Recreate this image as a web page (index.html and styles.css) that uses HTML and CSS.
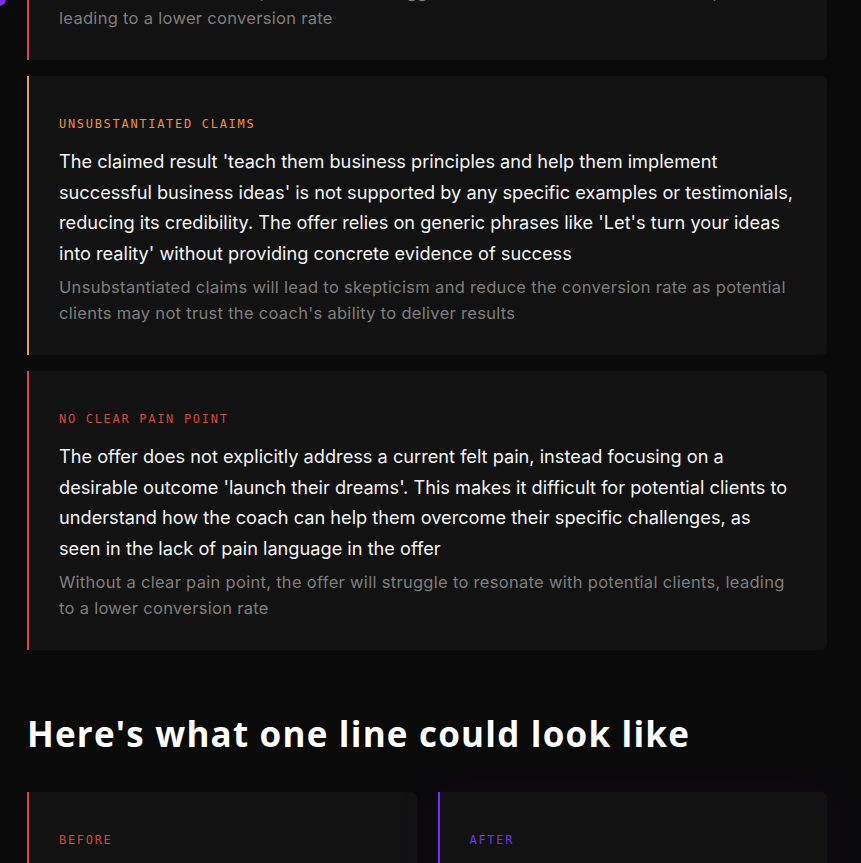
FILE: index.html
```html
<!DOCTYPE html>
<html>
<head>
<meta charset="utf-8"/>
<meta name="viewport" content="width=device-width, initial-scale=1.0"/>
<title>Offer review</title>
<link rel="stylesheet" href="styles.css">
</head>
<body>

<div class="dot"></div>

<div id="main">
  <div class="issues">
    <div class="issue red first">
      <p class="why">Without a clear audience, the offer will struggle to stand out in a crowded market,<br>
      leading to a lower conversion rate</p>
    </div>
    <div class="issue orange">
      <div class="tag">Unsubstantiated claims</div>
      <p class="what">The claimed result 'teach them business principles and help them implement successful business ideas' is not supported by any specific examples or testimonials, reducing its credibility. The offer relies on generic phrases like 'Let's turn your ideas into reality' without providing concrete evidence of success</p>
      <p class="why">Unsubstantiated claims will lead to skepticism and reduce the conversion rate as potential clients may not trust the coach's ability to deliver results</p>
    </div>
    <div class="issue red">
      <div class="tag">No clear pain point</div>
      <p class="what">The offer does not explicitly address a current felt pain, instead focusing on a desirable outcome 'launch their dreams'. This makes it difficult for potential clients to understand how the coach can help them overcome their specific challenges, as seen in the lack of pain language in the offer</p>
      <p class="why">Without a clear pain point, the offer will struggle to resonate with potential clients, leading to a lower conversion rate</p>
    </div>
  </div>

  <h2>Here's what one line could look like</h2>

  <div class="compare">
    <div class="issue red">
      <div class="tag">Before</div>
    </div>
    <div class="issue purple glow">
      <div class="tag">After</div>
    </div>
  </div>
</div>

</body>
</html>
```

FILE: styles.css
```css
body {
  margin: 0;
  background: #0a0a0a;
  color: #f2f2f2;
  font-family: "Inter", "DejaVu Sans", sans-serif;
  --red: #d9463a;
  --orange: #e6a23a;
  --purple: #7b2ff2;
  overflow: hidden;
}
.dot {
  position: fixed;
  top: -8px;
  left: -8px;
  width: 14px;
  height: 14px;
  border-radius: 50%;
  background: var(--purple);
}
#main {
  width: 800px;
  margin-left: 27px;
}
/* issue cards */
.issues {
  display: flex;
  flex-direction: column;
  gap: 16px;
}
.issue {
  background: #121212;
  border-left: 2px solid var(--red);
  border-radius: 0 6px 6px 0;
  padding: 40px 30px 29px 30px;
}
.issue.first {
  padding-top: 0;
  margin-top: -21px;
}
.issue.first .why {
  margin-top: 0;
}
.issue.orange { border-left-color: var(--orange); }
.issue.purple { border-left-color: var(--purple); }
.glow {
  box-shadow: 0 0 40px 10px rgba(123, 47, 242, 0.05);
}
.tag {
  font-family: "DejaVu Sans Mono", monospace;
  font-size: 12px;
  line-height: 16px;
  letter-spacing: 1.7px;
  text-transform: uppercase;
  color: var(--red);
  margin-bottom: 14px;
}
.orange .tag { color: #f0913a; }
.purple .tag { color: #7a2cf5; }
.what {
  margin: 0;
  font-size: 18.2px;
  line-height: 30.5px;
  color: #f4f4f4;
}
.why {
  margin: 6px 0 0 0;
  font-size: 16.5px;
  letter-spacing: 0.3px;
  line-height: 26px;
  color: #7e7e7e;
}
h2 {
  margin: 62px 0 36px 0;
  font-family: "Open Sans", sans-serif;
  font-weight: 700;
  font-size: 35px;
  letter-spacing: 1.2px;
  line-height: 44px;
  color: #fff;
}
.compare {
  display: grid;
  grid-template-columns: 1fr 1fr;
  gap: 21px;
}
.compare .issue {
  height: 120px;
  padding-bottom: 0;
}
```
